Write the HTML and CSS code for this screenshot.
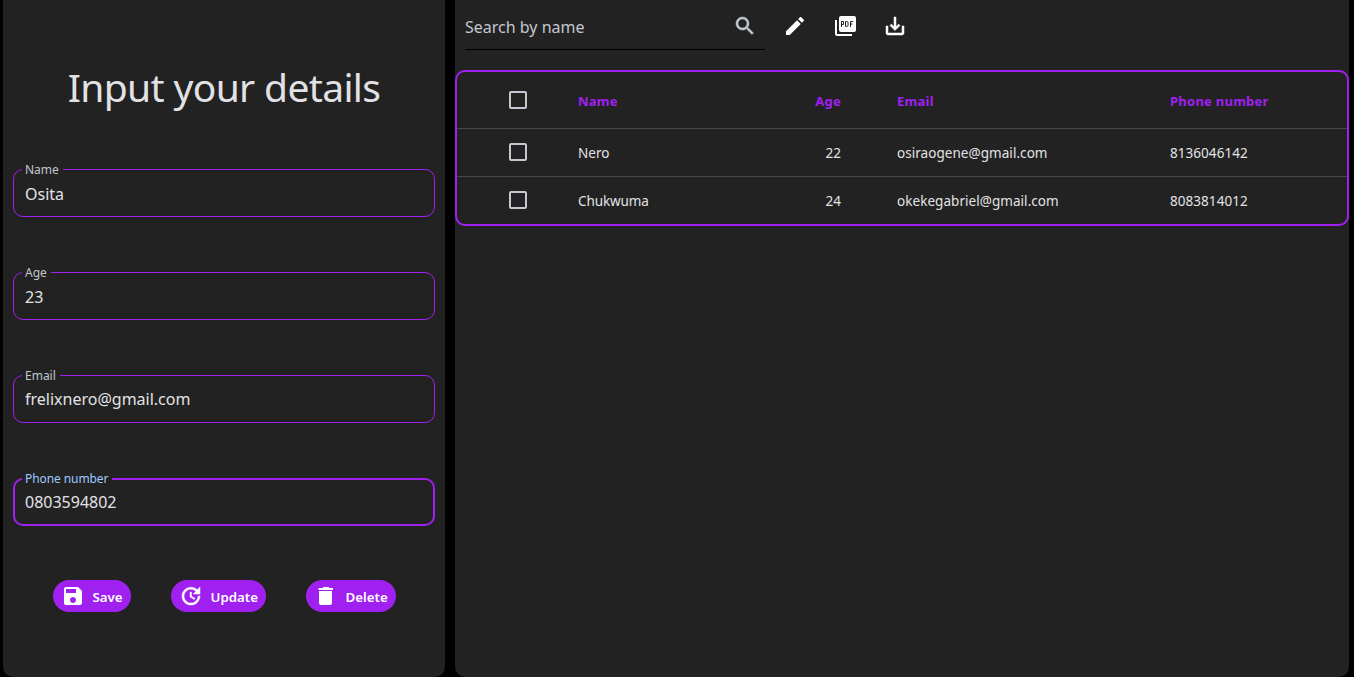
FILE: index.html
```html
<!DOCTYPE html>
<html lang="en">
<head>
<meta charset="utf-8">
<title>Details</title>
<link rel="stylesheet" href="styles.css">
</head>
<body>
<main class="app">
  <section class="panel form-panel">
    <h1 class="title">Input your details</h1>
    <div class="fields">
      <fieldset class="field"><legend>Name</legend><span class="value">Osita</span></fieldset>
      <fieldset class="field"><legend>Age</legend><span class="value">23</span></fieldset>
      <fieldset class="field"><legend>Email</legend><span class="value raised">frelixnero@gmail.com</span></fieldset>
      <fieldset class="field focused"><legend>Phone number</legend><span class="value raised">0803594802</span></fieldset>
    </div>
    <div class="actions">
      <button class="btn save"><svg viewBox="0 0 24 24"><path d="M17 3H5c-1.11 0-2 .9-2 2v14c0 1.1.89 2 2 2h14c1.1 0 2-.9 2-2V7l-4-4zm-5 16c-1.66 0-3-1.34-3-3s1.34-3 3-3 3 1.34 3 3-1.34 3-3 3zm3-10H5V5h10v4z"/></svg><span>Save</span></button>
      <button class="btn update"><svg class="bold" viewBox="0 0 24 24"><path d="M21 10.12h-6.78l2.74-2.82c-2.73-2.7-7.15-2.8-9.88-.1-2.73 2.71-2.73 7.08 0 9.79s7.15 2.71 9.88 0C18.32 15.65 19 14.08 19 12.1h2c0 1.98-.88 4.55-2.64 6.29-3.51 3.48-9.21 3.48-12.72 0-3.5-3.47-3.53-9.11-.02-12.58s9.14-3.47 12.65 0L21 3v7.12zM12.5 8v4.25l3.5 2.08-.72 1.21L11 13V8h1.5z"/></svg><span>Update</span></button>
      <button class="btn delete"><svg viewBox="0 0 24 24"><path d="M5 19c0 1.1.9 2 2 2h9c1.1 0 2-.9 2-2V7H5v12zM19 4h-3.5l-1-1h-5l-1 1H4.5v2H19V4z"/></svg><span>Delete</span></button>
    </div>
  </section>
  <section class="panel data-panel">
    <div class="toolbar">
      <div class="search"><span>Search by name</span><svg class="bold" viewBox="0 0 24 24"><path d="M15.5 14h-.79l-.28-.27C15.41 12.59 16 11.11 16 9.5 16 5.91 13.09 3 9.5 3S3 5.91 3 9.5 5.91 16 9.5 16c1.61 0 3.09-.59 4.23-1.57l.27.28v.79l5 4.99L20.49 19l-4.99-5zm-6 0C7.01 14 5 11.99 5 9.5S7.01 5 9.5 5 14 7.01 14 9.5 11.99 14 9.5 14z"/></svg></div>
      <svg viewBox="0 0 24 24"><path d="M3 17.25V21h3.75L17.81 9.94l-3.75-3.75L3 17.25zM20.71 7.04c.39-.39.39-1.02 0-1.41l-2.34-2.34c-.39-.39-1.02-.39-1.41 0l-1.83 1.83 3.75 3.75 1.83-1.83z"/></svg>
      <svg viewBox="0 0 24 24"><path d="M8 2h13a2 2 0 0 1 2 2v12a2 2 0 0 1-2 2H8a2 2 0 0 1-2-2V4a2 2 0 0 1 2-2zM4 6H2v14c0 1.1.9 2 2 2h15v-2H4z"/><path class="mark" d="M8.5 13V7.5h2v3h-2M12.5 7.5h1.3q1.2 0 1.2 1v2.9q0 1-1.2 1h-1.3zM17.5 13V7.5h2.7M17.5 10h2"/></svg>
      <svg class="bold" viewBox="0 0 24 24"><path d="M19 12v7H5v-7H3v7c0 1.1.9 2 2 2h14c1.1 0 2-.9 2-2v-7h-2zm-6 .67l2.59-2.58L17 11.5l-5 5-5-5 1.41-1.41L11 12.67V3h2v9.67z"/></svg>
    </div>
    <div class="table">
      <div class="row head"><i class="check"></i><span>Name</span><span class="num">Age</span><span class="mail">Email</span><span>Phone number</span></div>
      <div class="row"><i class="check"></i><span>Nero</span><span class="num">22</span><span class="mail">osiraogene@gmail.com</span><span>8136046142</span></div>
      <div class="row"><i class="check"></i><span class="tight">Chukwuma</span><span class="num">24</span><span class="mail">okekegabriel@gmail.com</span><span>8083814012</span></div>
    </div>
  </section>
</main>
</body>
</html>
```
FILE: styles.css
```css
* { box-sizing: border-box; }
body { margin: 0; background: #000; color: #e2e2e6; font-family: "Noto Sans", "Open Sans", sans-serif; }
svg { width: 24px; height: 24px; fill: #fff; flex: none; display: block; }
.bold path { stroke: #fff; stroke-width: .5; }
.mark { fill: none; stroke: #222; stroke-width: 1; }
.app { display: flex; gap: 10px; height: 677px; padding: 0 5px 0 3px; overflow: hidden; }
.panel { background: #222; border-radius: 0 0 10px 10px; }
.form-panel { width: 442px; padding: 59px 10px 0; }
.data-panel { flex: 1; }
.title { margin: 0; height: 57px; line-height: 56px; font-size: 39px; font-weight: 400; letter-spacing: -.65px; text-align: center; white-space: nowrap; }
.fields { display: flex; flex-direction: column; gap: 47px; padding-top: 45px; }
.field { margin: 0; height: 56px; min-width: 0; border: 1px solid #a020f0; border-radius: 10px; padding: 0 11px; white-space: nowrap; }
.field legend { margin-left: -3px; padding: 0 4px 0 3px; height: 17px; line-height: 17px; font-size: 12px; color: #c3c7cf; }
.field .value { display: block; height: 24px; line-height: 24px; font-size: 16px; margin-top: 4px; }
.field .raised { margin-top: 3px; }
.field.focused { border-width: 2px; padding: 0 10px; }
.field.focused legend { color: #9ecaff; letter-spacing: -.08px; }
.actions { display: flex; gap: 40px; padding: 54px 0 0 40px; }
.btn { display: flex; align-items: center; gap: 8px; height: 32px; padding: 0 8px; border: 0; border-radius: 16px; background: #a020f0; color: #fff; font: 600 13.3px "Noto Sans", sans-serif; white-space: nowrap; }
.btn span { padding-top: 1px; margin-left: -.5px; }
.save { width: 78px; }
.update { width: 95px; }
.delete { width: 90px; }
.toolbar { display: flex; align-items: flex-start; gap: 26px; height: 70px; padding-left: 10px; }
.toolbar > svg { margin-top: 14px; }
.search { display: flex; justify-content: space-between; width: 300px; height: 50px; padding: 14px 8px 0 0; margin-right: -8px; border-bottom: 1px solid #000; color: #c3c7cf; font-size: 16px; line-height: 26px; }
.search svg { fill: #c3c7cf; }
.search path { stroke: #c3c7cf; }
.table { border: 2px solid #a020f0; border-radius: 10px; }
.row { display: grid; grid-template-columns: 121px 200px 63px 329px 1fr; align-items: center; height: 48px; font-size: 13.5px; letter-spacing: .05px; line-height: 20px; white-space: nowrap; border-top: 1px solid #43474e; }
.row.head { height: 56px; border-top: 0; color: #a020f0; font-weight: 700; font-size: 13px; letter-spacing: .25px; }
.head span { padding-top: 2px; }
.check { width: 18px; height: 18px; margin: 0 0 1px 51.5px; border: 2px solid #c3c7cf; border-radius: 2px; }
.head .check { margin-bottom: 0; }
.tight { letter-spacing: -.1px; }
.num { text-align: right; }
.mail { padding-left: 56px; }
```
